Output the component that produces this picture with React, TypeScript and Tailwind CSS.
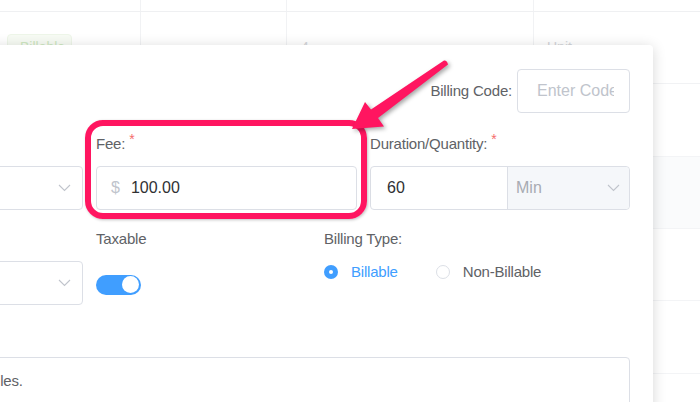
import React from 'react';

const font = { fontFamily: '"Liberation Sans", Arial, sans-serif' };

function Chevron() {
  return (
    <svg width="13" height="8" viewBox="0 0 13 8" fill="none" className="shrink-0">
      <path d="M1 1l5.5 5.5L12 1" stroke="#c0c4cc" strokeWidth="1.1" />
    </svg>
  );
}

function Label({ text, required }: { text: string; required?: boolean }) {
  return (
    <div className="h-5 leading-5 text-[15px] tracking-[-0.2px] text-[#606266] whitespace-nowrap">
      {text}
      {required && <span className="relative top-[-5px] ml-[4px] text-[14px] text-[#f56c6c]">*</span>}
    </div>
  );
}

function SelectBox() {
  return (
    <div className="h-[44px] border border-[#dcdfe6] rounded-[4px] bg-white flex items-center justify-end pr-[11px]">
      <Chevron />
    </div>
  );
}

function BackgroundTable() {
  const cols = 'grid grid-cols-[141px_146px_247px_1fr]';
  const cell = 'border-r border-[#f1f2f4]';
  return (
    <div className="absolute inset-0 bg-white">
      <div className={`${cols} h-[12px] border-b border-[#eff0f2]`}>
        <div className={cell} />
        <div className={cell} />
        <div className={cell} />
        <div />
      </div>
      <div className={`${cols} h-[72px] border-b border-[#f1f2f4]`}>
        <div className={`${cell} pl-[7px] pt-[22px]`}>
          <div className="w-[65px] h-[26px] rounded-[4px] bg-[#f7fbf4] border border-[#eef6e9] text-[14px] leading-[24px] text-[#cfe8c2] pl-[12px]">
            Billable
          </div>
        </div>
        <div className={cell} />
        <div className={`${cell} pl-[14px] pt-[25px] text-[14px] text-[#d4d6da]`}>4</div>
        <div className="pl-[13px] pt-[25px] text-[14px] text-[#d4d6da]">Unit</div>
      </div>
      <div className="h-[73px] border-b border-[#f3f4f6]" />
      <div className="h-[72px] border-b border-[#f3f4f6] bg-[#fafbfc]" />
      <div className="h-[72px] border-b border-[#f3f4f6]" />
      <div className="h-[73px] border-b border-[#f3f4f6]" />
    </div>
  );
}

function Modal() {
  return (
    <div className="absolute left-[-201px] top-[45px] w-[854px] h-[400px] bg-white rounded-[4px] shadow-[0_2px_14px_rgba(0,0,0,0.16)] px-[23px] pt-[24px]">
      <div className="flex justify-end items-center gap-[5px]">
        <span className="text-[15px] tracking-[-0.2px] text-[#606266]">Billing Code:</span>
        <input
          readOnly
          placeholder="Enter Code"
          className="w-[113px] h-[44px] border border-[#dcdfe6] rounded-[4px] pl-[19px] pr-[15px] text-[16px] text-[#303133] placeholder:text-[#c0c4cc] outline-none"
          style={font}
        />
      </div>

      <div className="grid grid-cols-[261px_261px_260px] gap-x-[13px] mt-[21px]">
        <div>
          <div className="h-5" />
          <div className="mt-[12px]">
            <SelectBox />
          </div>
        </div>
        <div>
          <Label text="Fee:" required />
          <div className="mt-[12px] h-[44px] border border-[#dcdfe6] rounded-[4px] flex items-center pl-[14px] text-[16px]">
            <span className="text-[#c0c4cc]">$</span>
            <span className="ml-[11px] text-[#303133]">100.00</span>
          </div>
        </div>
        <div>
          <Label text="Duration/Quantity:" required />
          <div className="mt-[12px] h-[44px] border border-[#dcdfe6] rounded-[4px] flex text-[16px]">
            <div className="w-[137px] flex items-center pl-[16px] text-[#303133] border-r border-[#dcdfe6]">60</div>
            <div className="flex-1 flex items-center justify-between pl-[8px] pr-[9px] bg-[#f5f7fa] rounded-r-[4px] text-[#a8abb2]">
              <span>Min</span>
              <Chevron />
            </div>
          </div>
        </div>
      </div>

      <div className="grid grid-cols-[261px_215px_1fr] gap-x-[13px] mt-[19px]">
        <div>
          <div className="h-5" />
          <div className="mt-[12px]">
            <SelectBox />
          </div>
        </div>
        <div>
          <Label text="Taxable" />
          <div className="mt-[12px] h-[44px] flex items-center pt-[3px]">
            <div className="w-[45px] h-[20px] rounded-full bg-[#409eff] flex items-center justify-end pr-[2px]">
              <div className="w-[17px] h-[17px] rounded-full bg-white" />
            </div>
          </div>
        </div>
        <div>
          <Label text="Billing Type:" />
          <div className="mt-[13px] h-5 flex items-center text-[15px] tracking-[-0.2px]">
            <span className="w-[14px] h-[14px] rounded-full bg-[#409eff] flex items-center justify-center">
              <span className="w-[4px] h-[4px] rounded-full bg-white" />
            </span>
            <span className="ml-[13px] text-[#409eff]">Billable</span>
            <span className="ml-[38px] w-[14px] h-[14px] rounded-full border border-[#dcdfe6] bg-white" />
            <span className="ml-[13px] text-[#606266]">Non-Billable</span>
          </div>
        </div>
      </div>

      <div className="mt-[52px] h-[80px] border border-[#dcdfe6] rounded-[4px] pl-[15px] pt-[13px] text-[15px] leading-5 tracking-[-0.2px] text-[#606266] whitespace-nowrap overflow-hidden">
        Applies to all visit schedules.
      </div>
    </div>
  );
}

function Annotation() {
  return (
    <>
      <div className="absolute left-[85px] top-[120px] w-[282px] h-[99px] border-[6px] border-[#ff1560] rounded-[18px] shadow-[1px_1px_3px_rgba(0,0,0,0.25)]" />
      <svg
        className="absolute left-0 top-0"
        width="700"
        height="402"
        style={{ filter: 'drop-shadow(2px 2px 2px rgba(0,0,0,0.35))' }}
      >
        <path
          d="M444 60.5 Q447 60 448 64.5 L378 118 L384 126.5 L352 129 L365 102 L371 109.5 Z"
          fill="#ff1560"
        />
      </svg>
    </>
  );
}

export default function App() {
  return (
    <div className="relative w-[700px] h-[402px] overflow-hidden bg-white" style={font}>
      <BackgroundTable />
      <Modal />
      <Annotation />
    </div>
  );
}
